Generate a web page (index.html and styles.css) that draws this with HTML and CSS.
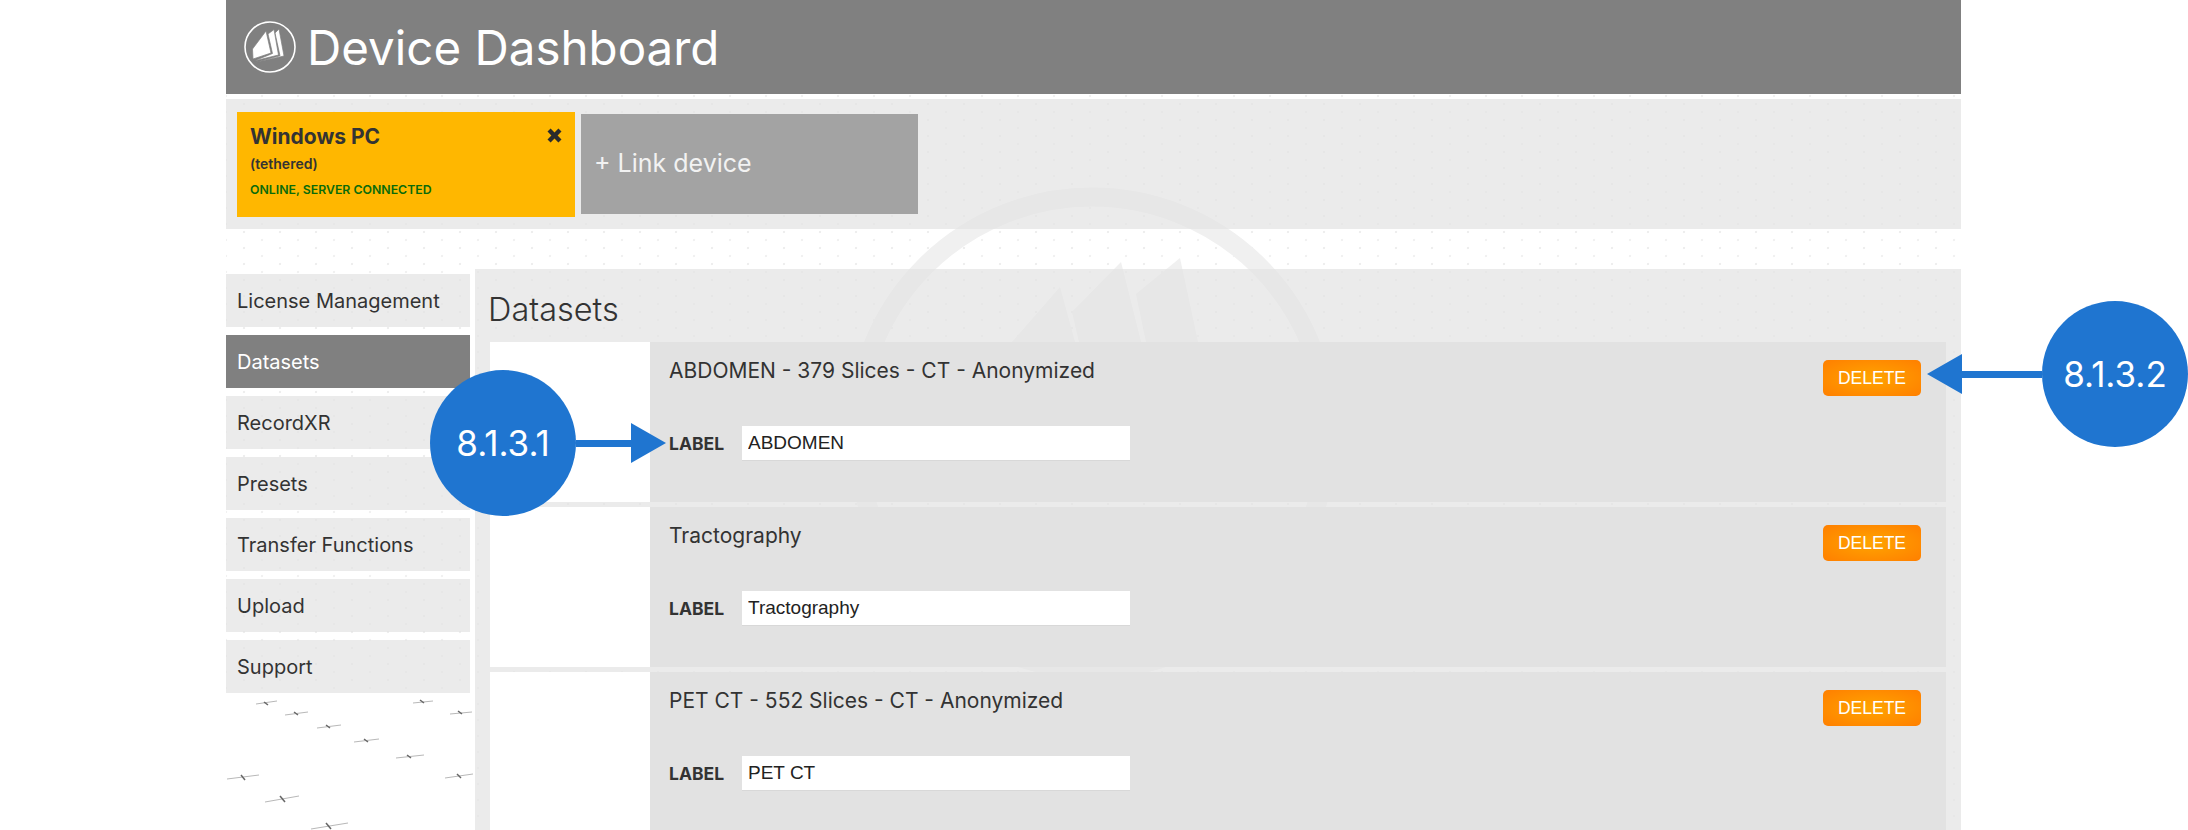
FILE: index.html
```html
<!DOCTYPE html>
<html lang="en">
<head>
    <meta charset="UTF-8">
    <title>Device Dashboard</title>
    <link rel="stylesheet" href="styles.css">
</head>
<body>
    <div class="page">
        <!-- watermark behind the panels -->
        <svg class="backdrop" width="1735" height="830" viewBox="226 0 1735 830">
            <rect x="226" y="693" width="249" height="137" fill="#fff"/>
            <circle cx="1092" cy="433" r="236" fill="none" stroke="#f0f0f0" stroke-width="19"/>
            <path fill="#f0f0f0" d="M1060 287L1012 342L990 420H1090L1075 342Z"/>
            <path fill="#f0f0f0" d="M1072 312L1121 262L1141 342L1150 420H1090L1079 342Z"/>
            <path fill="#f0f0f0" d="M1136 294L1180 258L1198 342L1210 420H1155L1146 342Z"/>
            <g stroke="#b8b8b8" stroke-width="1">
                <path d="M256 704L277 701"/><path d="M285 715L308 712"/><path d="M317 728L341 725"/>
                <path d="M354 742L379 739"/><path d="M396 758L424 755"/><path d="M227 779L259 775"/>
                <path d="M265 802L299 796"/><path d="M311 829L348 823"/><path d="M413 703L433 701"/>
                <path d="M450 714L472 712"/><path d="M445 778L473 774"/>
            </g>
            <g stroke="#666666" stroke-width="1.5">
                <path d="M264 702L268 705"/><path d="M294 712L298 715"/><path d="M326 725L330 728"/>
                <path d="M364 739L368 742"/><path d="M407 755L411 758"/><path d="M241 775L245 780"/>
                <path d="M280 796L285 802"/><path d="M326 823L331 829"/><path d="M420 700L424 703"/>
                <path d="M458 711L462 714"/><path d="M457 774L461 778"/>
            </g>
        </svg>

        <header class="top-bar">
            <svg class="logo" width="52" height="52" viewBox="0 0 52 52">
                <circle cx="26" cy="26" r="25" fill="none" stroke="#fff" stroke-width="1.6"/>
                <path fill="#fff" stroke="#808080" stroke-width="0.7" d="M31 12L35 8L40 35L11 41.5L36 34.8Z"/>
                <path fill="#fff" stroke="#808080" stroke-width="0.7" d="M24 13L30 8.5L34.5 34L10 40L28.5 32.5Z"/>
                <path fill="#fff" stroke="#808080" stroke-width="0.7" d="M22 10L8.5 28L9 38L27 32Z"/>
            </svg>
            <h1>Device Dashboard</h1>
        </header>

        <section class="device-bar">
            <div class="device-card">
                <div class="device-name">Windows PC</div>
                <svg class="device-close" width="15" height="15" viewBox="0 0 15 15">
                    <path fill="#2b2b2b" d="M0.5 3.6L3.6 0.5L7.5 4.4L11.4 0.5L14.5 3.6L10.6 7.5L14.5 11.4L11.4 14.5L7.5 10.6L3.6 14.5L0.5 11.4L4.4 7.5Z"/>
                </svg>
                <div class="device-mode">(tethered)</div>
                <div class="device-status">ONLINE, SERVER CONNECTED</div>
            </div>
            <div class="link-device">+ Link device</div>
        </section>

        <div class="content">
            <nav class="side-nav">
                <a class="nav-item">License Management</a>
                <a class="nav-item active">Datasets</a>
                <a class="nav-item">RecordXR</a>
                <a class="nav-item">Presets</a>
                <a class="nav-item">Transfer Functions</a>
                <a class="nav-item">Upload</a>
                <a class="nav-item">Support</a>
            </nav>

            <main class="main-panel">
                <h2>Datasets</h2>

                <div class="dataset">
                    <div class="thumb"></div>
                    <div class="details">
                        <div class="details-top">
                            <div class="name">ABDOMEN - 379 Slices - CT - Anonymized</div>
                            <button class="delete">DELETE</button>
                        </div>
                        <div class="label-row">
                            <label>LABEL</label>
                            <input type="text" value="ABDOMEN">
                        </div>
                    </div>
                </div>

                <div class="dataset">
                    <div class="thumb"></div>
                    <div class="details">
                        <div class="details-top">
                            <div class="name">Tractography</div>
                            <button class="delete">DELETE</button>
                        </div>
                        <div class="label-row">
                            <label>LABEL</label>
                            <input type="text" value="Tractography">
                        </div>
                    </div>
                </div>

                <div class="dataset">
                    <div class="thumb"></div>
                    <div class="details">
                        <div class="details-top">
                            <div class="name">PET CT - 552 Slices - CT - Anonymized</div>
                            <button class="delete">DELETE</button>
                        </div>
                        <div class="label-row">
                            <label>LABEL</label>
                            <input type="text" value="PET CT">
                        </div>
                    </div>
                </div>
            </main>
        </div>
    </div>

    <!-- callouts drawn over the screenshot -->
    <div class="callout callout-left">
        <div class="bubble">8.1.3.1</div>
        <div class="shaft"></div>
        <div class="head"></div>
    </div>
    <div class="callout callout-right">
        <div class="head"></div>
        <div class="shaft"></div>
        <div class="bubble">8.1.3.2</div>
    </div>
</body>
</html>
```

FILE: styles.css
```css
html, body {
    margin: 0;
    padding: 0;
    height: 830px;
    overflow: hidden;
    background-color: #fff;
    font-family: Inter, "Liberation Sans", sans-serif;
    color: #333;
}
.page {
    position: relative;
    width: 1735px;
    height: 830px;
    margin-left: 226px;
    overflow: hidden;
    background-image:
        radial-gradient(circle, #eeeeee 1px, transparent 1.6px),
        radial-gradient(circle, #f1f1f1 1px, transparent 1.6px);
    background-size: 36px 16px, 36px 16px;
    background-position: 0 0, 18px 8px;
}
.backdrop {
    position: absolute;
    top: 0;
    left: 0;
}
.top-bar {
    position: relative;
    display: flex;
    align-items: center;
    height: 94px;
    padding-left: 18px;
    background-color: #808080;
    box-sizing: border-box;
}
.top-bar h1 {
    margin: 0 0 0 11px;
    font-size: 47.5px;
    font-weight: 400;
    color: #fff;
}
.device-bar {
    position: relative;
    display: flex;
    align-items: center;
    gap: 6px;
    height: 130px;
    margin-top: 5px;
    padding-left: 11px;
    background-color: rgba(226,226,226,0.7);
}
.device-card {
    position: relative;
    width: 338px;
    height: 105px;
    padding: 13px 13px;
    box-sizing: border-box;
    background-color: #ffb700;
}
.device-name {
    font-size: 21px;
    font-weight: 700;
    line-height: 24px;
}
.device-close {
    position: absolute;
    top: 16px;
    right: 13px;
}
.device-mode {
    margin-top: 6px;
    font-size: 14px;
    font-weight: 600;
    line-height: 18px;
}
.device-status {
    margin-top: 9px;
    font-size: 12.3px;
    font-weight: 600;
    line-height: 16px;
    color: #0a6b0a;
}
.link-device {
    display: flex;
    align-items: center;
    width: 337px;
    height: 100px;
    padding: 0 0 2px 13px;
    box-sizing: border-box;
    background-color: #a3a3a3;
    font-size: 25px;
    color: #f2f2f2;
}
.content {
    position: relative;
    display: flex;
    margin-top: 40px;
}
.side-nav {
    display: flex;
    flex-direction: column;
    gap: 8px;
    width: 244px;
    margin-top: 5px;
    margin-right: 5px;
}
.nav-item {
    display: flex;
    align-items: center;
    height: 53px;
    padding-left: 11px;
    background-color: rgba(226,226,226,0.7);
    font-size: 20px;
}
.nav-item.active {
    background-color: #808080;
    color: #fff;
}
.main-panel {
    flex-grow: 1;
    height: 561px;
    padding: 23px 15px 0;
    background-color: rgba(226,226,226,0.7);
}
.main-panel h2 {
    margin: 0 0 14px -2px;
    font-size: 32.5px;
    line-height: 36px;
    font-weight: 300;
}
.dataset {
    display: flex;
    height: 160px;
    margin-bottom: 5px;
}
.dataset .thumb {
    width: 160px;
    background-color: #fff;
}
.dataset .details {
    flex-grow: 1;
    padding: 18px 25px 0 19px;
    background-color: #e2e2e2;
}
.details-top {
    display: flex;
    justify-content: space-between;
    align-items: flex-start;
}
.details-top .name {
    font-size: 21px;
    line-height: 22px;
}
.delete {
    width: 98px;
    height: 36px;
    padding: 0;
    border: 0;
    border-radius: 5px;
    background: radial-gradient(ellipse at center, #ffa400, #ff7f00);
    color: #fff;
    font-family: "Liberation Sans", sans-serif;
    font-size: 17.5px;
}
.label-row {
    display: flex;
    align-items: center;
    margin-top: 30px;
}
.label-row label {
    width: 73px;
    font-size: 17.5px;
    font-weight: 700;
}
.label-row input {
    width: 388px;
    height: 35px;
    padding: 0 6px;
    box-sizing: border-box;
    border: 0;
    border-bottom: 1px solid #d8d8d8;
    background-color: #fff;
    color: #222;
    font-family: "Liberation Sans", sans-serif;
    font-size: 19px;
}
.callout {
    position: absolute;
    display: flex;
    align-items: center;
}
.callout-left {
    top: 370px;
    left: 430px;
}
.callout-right {
    top: 301px;
    left: 1927px;
}
.callout .bubble {
    display: flex;
    align-items: center;
    justify-content: center;
    width: 146px;
    height: 146px;
    border-radius: 50%;
    background-color: #1f75d0;
    color: #fff;
    font-size: 35px;
}
.callout .shaft {
    height: 7px;
    background-color: #1f75d0;
}
.callout-left .shaft {
    width: 55px;
}
.callout-right .shaft {
    width: 80px;
}
.callout .head {
    width: 0;
    height: 0;
    border-top: 20px solid transparent;
    border-bottom: 20px solid transparent;
}
.callout-left .head {
    border-left: 35px solid #1f75d0;
}
.callout-right .head {
    border-right: 35px solid #1f75d0;
}
```
